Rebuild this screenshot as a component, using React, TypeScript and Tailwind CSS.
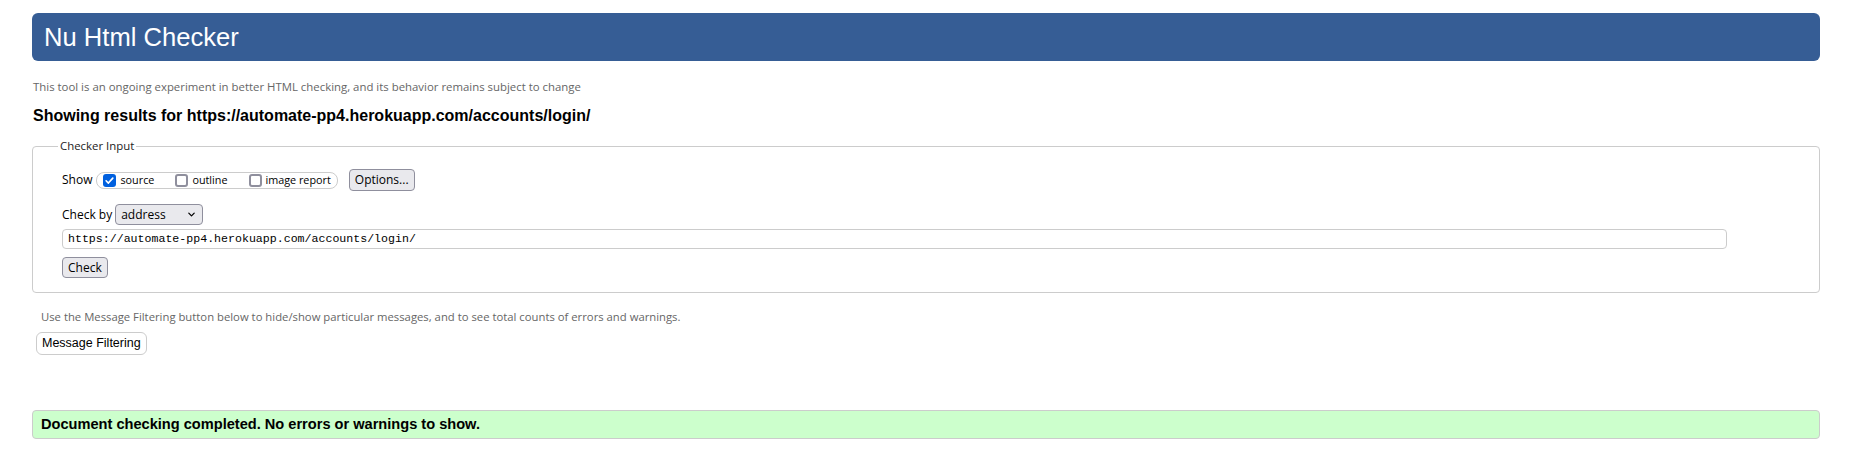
import { ReactNode } from 'react';

const ui = "font-['Open_Sans',sans-serif]";
const arial = "font-['Liberation_Sans',Arial,sans-serif]";

function Box({ checked }: { checked?: boolean }) {
  if (checked) {
    return (
      <span className="flex h-[13px] w-[13px] shrink-0 items-center justify-center rounded-[3px] bg-[#0060df]">
        <svg viewBox="0 0 12 12" className="h-[11px] w-[11px]" fill="none" stroke="white" strokeWidth="1.8" strokeLinecap="round" strokeLinejoin="round">
          <path d="M2.3 6.3l2.5 2.5 4.8-5.4" />
        </svg>
      </span>
    );
  }
  return <span className="block h-[13px] w-[13px] shrink-0 rounded-[3px] border-2 border-[#8f8f9d] bg-white" />;
}

function Btn({ children, h = 'h-[22px]' }: { children: ReactNode; h?: string }) {
  return (
    <button className={`${ui} flex ${h} items-center rounded-[4px] border border-[#8f8f9d] bg-[#e9e9ed] px-[5px] text-[12px] text-black`}>
      {children}
    </button>
  );
}

export default function App() {
  return (
    <div className="min-h-[451px] bg-white pl-[32px] pr-[43px] pt-[13px] text-black">
      {/* title bar */}
      <div className={`${arial} flex h-[48px] items-center rounded-[6px] bg-[#365d95] pl-[12px] text-[25.6px] text-white`}>
        Nu Html Checker
      </div>

      <p className={`${ui} mt-[18px] pl-[1px] text-[11.4px] leading-[16px] text-[#666]`}>
        This tool is an ongoing experiment in better HTML checking, and its behavior remains subject to change
      </p>

      <h2 className={`${arial} mt-[12px] pl-[1px] text-[16px] font-bold leading-[18px]`}>
        Showing results for https://automate-pp4.herokuapp.com/accounts/login/
      </h2>

      {/* checker input */}
      <fieldset className="mt-[13px] rounded-[4px] border border-[#ccc] px-[25px] pb-[14px]">
        <legend className={`${ui} px-[2px] text-[11.4px] leading-[16px] text-[#222]`}>Checker Input</legend>
        <div className="pl-[4px] pt-[15px]">
          <div className={`${ui} flex h-[22px] items-center text-[12px]`}>
            <span>Show</span>
            <div className="ml-[4px] flex h-[17px] items-center rounded-[8px] border border-[#ccc] px-[6px] text-[10.8px]">
              <Box checked />
              <span className="ml-[4px]">source</span>
              <span className="ml-[21px]"><Box /></span>
              <span className="ml-[4px]">outline</span>
              <span className="ml-[21px]"><Box /></span>
              <span className="ml-[4px]">image report</span>
            </div>
            <div className="ml-[11px]">
              <Btn>Options...</Btn>
            </div>
          </div>

          <div className={`${ui} mt-[13px] flex h-[21px] items-center text-[12px]`}>
            <span>Check by</span>
            <div className="ml-[3px] flex h-[21px] w-[88px] items-center justify-between rounded-[4px] border border-[#8f8f9d] bg-[#e9e9ed] pl-[5px] pr-[6px] text-[12px]">
              <span>address</span>
              <svg viewBox="0 0 10 10" className="h-[9px] w-[9px]" fill="none" stroke="black" strokeWidth="1.4" strokeLinecap="round" strokeLinejoin="round">
                <path d="M2 3.5l3 3 3-3" />
              </svg>
            </div>
          </div>

          <div className="mt-[4px] flex h-[20px] w-[1665px] items-center rounded-[4px] border border-[#ccc] bg-white pl-[5px] font-['Liberation_Mono',monospace] text-[11.6px]">
            https://automate-pp4.herokuapp.com/accounts/login/
          </div>

          <div className="mt-[8px] flex">
            <Btn h="h-[21px]">Check</Btn>
          </div>
        </div>
      </fieldset>

      <p className={`${ui} mt-[16px] pl-[9px] text-[11.3px] leading-[16px] text-[#666]`}>
        Use the Message Filtering button below to hide/show particular messages, and to see total counts of errors and warnings.
      </p>

      <div className="mt-[7px] flex pl-[4px]">
        <button className={`${arial} flex h-[23px] items-center rounded-[6px] border border-[#ccc] bg-white px-[5px] text-[12.5px] text-black`}>
          Message Filtering
        </button>
      </div>

      <div className={`${arial} mt-[55px] flex h-[29px] items-center rounded-[4px] border border-[#ccc] bg-[#ccffcc] pl-[8px] text-[14.6px] font-bold`}>
        Document checking completed. No errors or warnings to show.
      </div>
    </div>
  );
}
